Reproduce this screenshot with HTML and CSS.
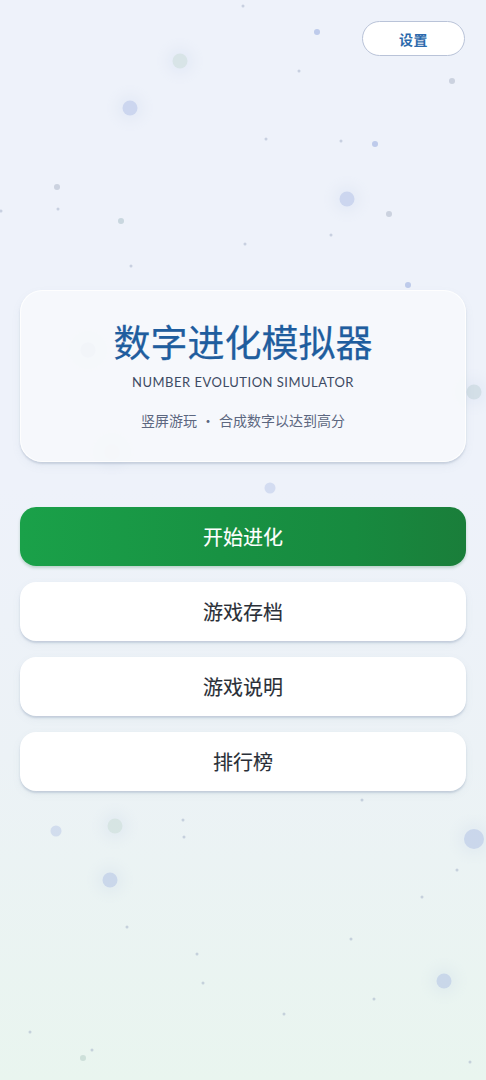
FILE: index.html
```html
<!DOCTYPE html>
<html lang="zh-CN">
<head>
<meta charset="utf-8">
<title>数字进化模拟器</title>
<link rel="stylesheet" href="styles.css">
</head>
<body>
<div class="bg" aria-hidden="true">
  <span class="dot s" style="left:243px;top:6px"></span>
  <span class="dot m blue" style="left:317px;top:32px"></span>
  <span class="dot glow green" style="left:180px;top:61px"></span>
  <span class="dot glow blue" style="left:130px;top:108px"></span>
  <span class="dot s" style="left:299px;top:71px"></span>
  <span class="dot s" style="left:266px;top:139px"></span>
  <span class="dot s" style="left:341px;top:141px"></span>
  <span class="dot m blue" style="left:375px;top:144px"></span>
  <span class="dot m grey" style="left:452px;top:81px"></span>
  <span class="dot m grey" style="left:57px;top:187px"></span>
  <span class="dot s" style="left:58px;top:209px"></span>
  <span class="dot m teal" style="left:121px;top:221px"></span>
  <span class="dot glow blue" style="left:347px;top:199px"></span>
  <span class="dot m grey" style="left:389px;top:214px"></span>
  <span class="dot s" style="left:331px;top:235px"></span>
  <span class="dot s" style="left:245px;top:244px"></span>
  <span class="dot s" style="left:131px;top:266px"></span>
  <span class="dot s" style="left:1px;top:211px"></span>
  <span class="dot m blue" style="left:408px;top:285px"></span>
  <span class="dot glow grey" style="left:88px;top:350px"></span>
  <span class="dot glow teal" style="left:474px;top:392px"></span>
  <span class="dot glow pink" style="left:112px;top:452px"></span>
  <span class="dot l blue" style="left:270px;top:488px"></span>
  <span class="dot l blue" style="left:56px;top:831px"></span>
  <span class="dot glow green" style="left:115px;top:826px"></span>
  <span class="dot s" style="left:184px;top:837px"></span>
  <span class="dot glow blue big" style="left:474px;top:839px"></span>
  <span class="dot glow blue" style="left:110px;top:880px"></span>
  <span class="dot s" style="left:457px;top:870px"></span>
  <span class="dot s" style="left:422px;top:897px"></span>
  <span class="dot s" style="left:127px;top:927px"></span>
  <span class="dot s" style="left:197px;top:954px"></span>
  <span class="dot s" style="left:203px;top:983px"></span>
  <span class="dot s" style="left:351px;top:939px"></span>
  <span class="dot glow blue" style="left:444px;top:981px"></span>
  <span class="dot s" style="left:374px;top:999px"></span>
  <span class="dot s" style="left:284px;top:1014px"></span>
  <span class="dot s" style="left:30px;top:1032px"></span>
  <span class="dot m green" style="left:83px;top:1058px"></span>
  <span class="dot s" style="left:92px;top:1050px"></span>
  <span class="dot s" style="left:470px;top:1062px"></span>
  <span class="dot s" style="left:362px;top:800px"></span>
  <span class="dot s" style="left:183px;top:820px"></span>
</div>

<main class="page">
  <header class="topbar">
    <button class="settings">设置</button>
  </header>

  <section class="card">
    <h1 class="title">数字进化模拟器</h1>
    <p class="subtitle">NUMBER EVOLUTION SIMULATOR</p>
    <p class="tagline">竖屏游玩<span class="sep">·</span>合成数字以达到高分</p>
  </section>

  <nav class="menu">
    <button class="btn primary">开始进化</button>
    <button class="btn">游戏存档</button>
    <button class="btn">游戏说明</button>
    <button class="btn">排行榜</button>
  </nav>
</main>
</body>
</html>
```

FILE: styles.css
```css
* { box-sizing: border-box; }

html, body {
  margin: 0;
  padding: 0;
}

body {
  width: 486px;
  min-height: 1080px;
  font-family: "Noto Sans CJK SC", "Noto Sans", sans-serif;
  background: linear-gradient(180deg, #eef2fa 0%, #eef2fa 45%, #ecf2f6 70%, #e9f5ef 100%);
  position: relative;
  overflow: hidden;
}

.bg {
  position: absolute;
  inset: 0;
  pointer-events: none;
}

.dot {
  position: absolute;
  border-radius: 50%;
  transform: translate(-50%, -50%);
  background: #9aa6c0;
}
.dot.s { width: 3px; height: 3px; opacity: 0.45; }
.dot.m { width: 6px; height: 6px; opacity: 0.5; }
.dot.l { width: 11px; height: 11px; opacity: 0.28; }
.dot.glow { width: 15px; height: 15px; opacity: 0.35; box-shadow: 0 0 10px 6px rgba(170, 190, 230, 0.3); }
.dot.big { width: 20px; height: 20px; }
.dot.blue { background: #8ea4dc; }
.dot.grey { background: #a7b2c4; }
.dot.teal { background: #a4bcc4; }
.dot.green { background: #b2ccc4; }
.dot.pink { background: #e6d6dc; }

.page {
  position: relative;
  padding: 21px 20px 0;
  display: flex;
  flex-direction: column;
}

.topbar {
  display: flex;
  justify-content: flex-end;
  padding-right: 1px;
}

.settings {
  width: 103px;
  height: 35px;
  border-radius: 18px;
  border: 1.5px solid #b9c3d8;
  background: #ffffff;
  color: #2d6aac;
  font-family: "Noto Sans CJK SC", sans-serif;
  font-size: 14px;
  font-weight: 700;
  letter-spacing: 0.5px;
  padding: 0;
}

.card {
  margin-top: 234px;
  height: 172px;
  border-radius: 22px;
  background: rgba(247, 249, 252, 0.85);
  border: 1px solid rgba(255, 255, 255, 0.9);
  box-shadow: 0 2px 2px rgba(120, 135, 160, 0.28), 0 4px 10px rgba(120, 140, 170, 0.08);
  display: flex;
  flex-direction: column;
  align-items: center;
  padding-top: 28px;
}

.title {
  margin: 0;
  font-size: 37px;
  line-height: 44px;
  font-weight: 400;
  color: #1f5d9e;
  -webkit-text-stroke: 0.25px #1f5d9e;
  letter-spacing: 0;
}

.subtitle {
  margin: 11px 0 0;
  font-family: "Lato", "Noto Sans", sans-serif;
  font-size: 13px;
  line-height: 16px;
  color: #3d4a63;
  letter-spacing: 0.5px;
}

.tagline {
  margin: 20px 0 0;
  font-size: 14px;
  line-height: 20px;
  color: #5c6780;
}

.sep {
  display: inline-block;
  margin: 0 4px;
}

.menu {
  margin-top: 45px;
  display: flex;
  flex-direction: column;
  gap: 16px;
}

.btn {
  height: 59px;
  border: none;
  border-radius: 16px;
  background: #ffffff;
  box-shadow: 0 2px 2px rgba(120, 140, 170, 0.3), 0 3px 8px rgba(120, 140, 170, 0.08);
  font-family: "Noto Sans CJK SC", sans-serif;
  font-size: 20px;
  font-weight: 400;
  color: #2a2f38;
  -webkit-text-stroke: 0.12px #2a2f38;
  padding: 0;
}

.btn.primary {
  background: linear-gradient(90deg, #1aa149 0%, #189243 45%, #178a3f 75%, #1a7e3a 100%);
  color: #ffffff;
  -webkit-text-stroke: 0.12px #ffffff;
  box-shadow: 0 2px 3px rgba(40, 120, 70, 0.25);
}
```
